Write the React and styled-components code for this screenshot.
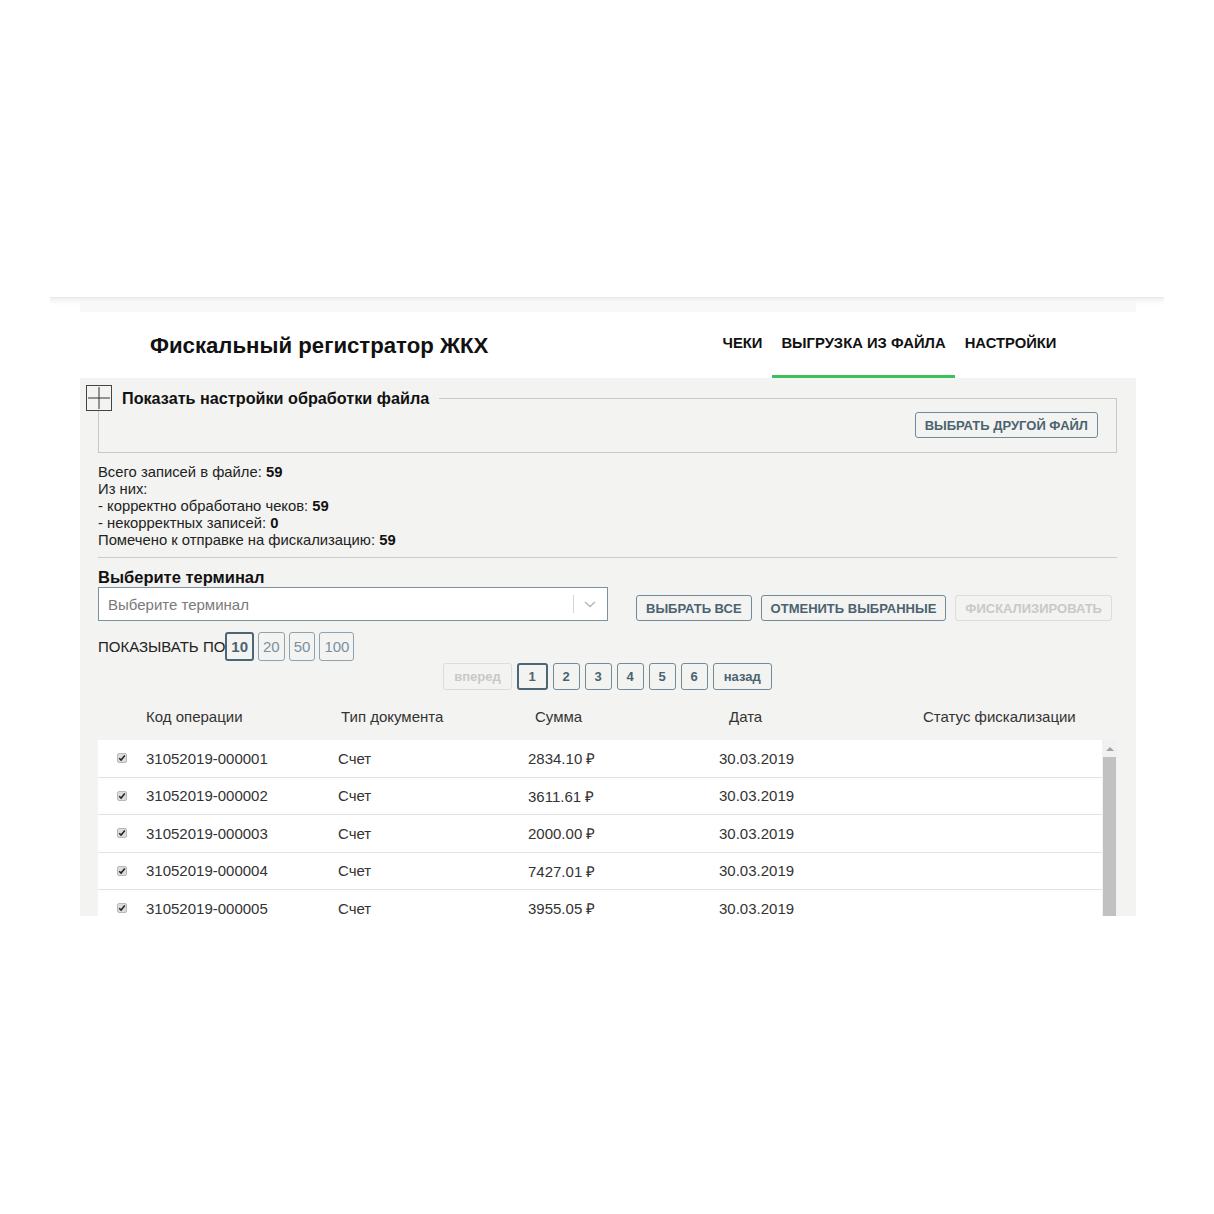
import React from "react";
import styled, { createGlobalStyle } from "styled-components";

const GlobalStyle = createGlobalStyle`
  body {
    margin: 0;
    background: #fff;
    font-family: "Liberation Sans", Arial, sans-serif;
    color: #222;
  }
`;

const rows = [
  ["31052019-000001", "Счет", "2834.10 ₽", "30.03.2019"],
  ["31052019-000002", "Счет", "3611.61 ₽", "30.03.2019"],
  ["31052019-000003", "Счет", "2000.00 ₽", "30.03.2019"],
  ["31052019-000004", "Счет", "7427.01 ₽", "30.03.2019"],
  ["31052019-000005", "Счет", "3955.05 ₽", "30.03.2019"],
];

function App() {
  return (
    <Page>
      <GlobalStyle />
      <Frame>
        <Panel>
          <TopStrip />
          <Header>
            <Title>Фискальный регистратор ЖКХ</Title>
            <Nav>
              <Tab>ЧЕКИ</Tab>
              <Tab active>ВЫГРУЗКА ИЗ ФАЙЛА</Tab>
              <Tab>НАСТРОЙКИ</Tab>
            </Nav>
          </Header>

          <Content>
            <FileBox>
              <Legend>
                <PlusBox>
                  <svg width="24" height="24" viewBox="0 0 24 24">
                    <path d="M12 1v22M1 12h22" stroke="#333" strokeWidth="1" fill="none" />
                  </svg>
                </PlusBox>
                Показать настройки обработки файла
              </Legend>
              <FileActions>
                <Button>ВЫБРАТЬ ДРУГОЙ ФАЙЛ</Button>
              </FileActions>
            </FileBox>

            <Stats>
              <div>Всего записей в файле: <b>59</b></div>
              <div>Из них:</div>
              <div>- корректно обработано чеков: <b>59</b></div>
              <div>- некорректных записей: <b>0</b></div>
              <div>Помечено к отправке на фискализацию: <b>59</b></div>
            </Stats>

            <Separator />

            <Label>Выберите терминал</Label>
            <ControlsRow>
              <Select>
                <Placeholder>Выберите терминал</Placeholder>
                <SelectDivider />
                <svg width="14" height="14" viewBox="0 0 14 14">
                  <path d="M2 5l5 4.5L12 5" stroke="#b5b5b5" strokeWidth="1.4" fill="none" />
                </svg>
              </Select>
              <ButtonGroup>
                <Button>ВЫБРАТЬ ВСЕ</Button>
                <Button>ОТМЕНИТЬ ВЫБРАННЫЕ</Button>
                <Button disabled>ФИСКАЛИЗИРОВАТЬ</Button>
              </ButtonGroup>
            </ControlsRow>

            <PerPageRow>
              <span>ПОКАЗЫВАТЬ ПО</span>
              <SizeButton active>10</SizeButton>
              <SizeButton>20</SizeButton>
              <SizeButton>50</SizeButton>
              <SizeButton>100</SizeButton>
            </PerPageRow>

            <Pager>
              <PageButton disabled wide>вперед</PageButton>
              <PageButton active>1</PageButton>
              <PageButton>2</PageButton>
              <PageButton>3</PageButton>
              <PageButton>4</PageButton>
              <PageButton>5</PageButton>
              <PageButton>6</PageButton>
              <PageButton wide>назад</PageButton>
            </Pager>

            <TableHead>
              <span />
              <HeadCell>Код операции</HeadCell>
              <HeadCell>Тип документа</HeadCell>
              <HeadCell>Сумма</HeadCell>
              <HeadCell>Дата</HeadCell>
              <HeadCell>Статус фискализации</HeadCell>
            </TableHead>

            <TableBody>
              <Rows>
                {rows.map((r) => (
                  <Row key={r[0]}>
                    <CheckCell>
                      <Check>
                        <svg width="8" height="8" viewBox="0 0 8 8">
                          <path d="M1.2 4.2l1.9 1.9L6.8 1.6" stroke="#222" strokeWidth="1.5" fill="none" />
                        </svg>
                      </Check>
                    </CheckCell>
                    <Cell>{r[0]}</Cell>
                    <Cell>{r[1]}</Cell>
                    <Cell>{r[2]}</Cell>
                    <Cell>{r[3]}</Cell>
                    <Cell />
                  </Row>
                ))}
              </Rows>
              <ScrollTrack>
                <ScrollArrow>
                  <svg width="8" height="6" viewBox="0 0 8 6">
                    <path d="M0 5h8L4 1z" fill="#a3a3a3" />
                  </svg>
                </ScrollArrow>
                <ScrollThumb />
              </ScrollTrack>
            </TableBody>
          </Content>
        </Panel>
      </Frame>
    </Page>
  );
}

const Page = styled.div`
  padding: 297px 0 0 50px;
  width: 1114px;
`;

const Frame = styled.div`
  border-top: 1px solid #e9e9e9;
  background: linear-gradient(#efefef, #fafafa 4px, #fff 8px);
  padding: 0 28px 0 30px;
`;

const Panel = styled.div`
  width: 1056px;
`;

const TopStrip = styled.div`
  height: 14px;
  background: linear-gradient(#eeeeee, #f8f8f8 4px);
`;

const Header = styled.header`
  height: 66px;
  background: #fff;
  display: flex;
  align-items: stretch;
`;

const Title = styled.h1`
  margin: 0 0 0 70px;
  align-self: center;
  padding-top: 1px;
  font-size: 22.2px;
  font-weight: bold;
  color: #111;
`;

const Nav = styled.nav`
  margin-left: auto;
  margin-right: 70px;
  display: flex;
`;

const Tab = styled.div`
  display: flex;
  align-items: center;
  padding: 0 9.5px 1px;
  font-size: 14.8px;
  font-weight: bold;
  color: #111;
  border-bottom: 3px solid ${(p) => (p.active ? "#3cc15a" : "transparent")};
`;

const Content = styled.main`
  box-sizing: border-box;
  background: #f3f3f1;
  height: 538px;
  overflow: hidden;
  padding: 7px 19px 0 18px;
`;

const FileBox = styled.fieldset`
  margin: 0;
  padding: 1px 18px 14px 19px;
  border: 1px solid #c9c9c9;
  min-width: 0;
`;

const Legend = styled.legend`
  display: flex;
  align-items: center;
  gap: 10px;
  margin-left: -32px;
  padding: 0 10px 0 0;
  font-size: 16.2px;
  font-weight: bold;
  color: #111;
`;

const PlusBox = styled.span`
  width: 24px;
  height: 24px;
  border: 1px solid #444;
  background: #f3f3f1;
  display: flex;
`;

const FileActions = styled.div`
  display: flex;
  justify-content: flex-end;
`;

const Button = styled.button`
  height: 26px;
  padding: 0 9px;
  background: transparent;
  border: 1px solid ${(p) => (p.disabled ? "#dcdcdc" : "#748a96")};
  border-radius: 3px;
  font-family: "Liberation Sans", Arial, sans-serif;
  font-size: 13px;
  font-weight: bold;
  color: ${(p) => (p.disabled ? "#c9c9c9" : "#4b6370")};
`;

const Stats = styled.div`
  margin-top: 11px;
  font-size: 14.8px;
  line-height: 17px;
  color: #222;
  b {
    color: #111;
  }
`;

const Separator = styled.hr`
  margin: 8px 0 0;
  border: 0;
  border-top: 1px solid #cdcdcd;
`;

const Label = styled.div`
  margin-top: 9px;
  font-size: 16.5px;
  line-height: 20px;
  font-weight: bold;
  color: #111;
`;

const ControlsRow = styled.div`
  display: flex;
  align-items: flex-end;
  gap: 28px;
`;

const Select = styled.div`
  box-sizing: border-box;
  width: 510px;
  height: 34px;
  border: 1px solid #7d919c;
  background: #fff;
  display: flex;
  align-items: center;
  padding-right: 10px;
`;

const Placeholder = styled.span`
  flex: 1;
  padding-left: 9px;
  font-size: 15px;
  color: #7a7a7a;
`;

const SelectDivider = styled.span`
  width: 1px;
  height: 18px;
  background: #d5d5d5;
  margin-right: 9px;
`;

const ButtonGroup = styled.div`
  display: flex;
  gap: 9px;
`;

const PerPageRow = styled.div`
  margin-top: 11px;
  display: flex;
  align-items: center;
  gap: 4px;
  font-size: 15px;
  color: #222;
  span {
    margin-right: -4px;
  }
`;

const SizeButton = styled.button`
  height: 29px;
  min-width: 26px;
  padding: 0 4px;
  background: transparent;
  border: ${(p) => (p.active ? "2px solid #4e6674" : "1px solid #8fa2ad")};
  border-radius: 3px;
  font-family: "Liberation Sans", Arial, sans-serif;
  font-size: 15px;
  font-weight: ${(p) => (p.active ? "bold" : "normal")};
  color: ${(p) => (p.active ? "#4b6370" : "#7990a0")};
`;

const Pager = styled.div`
  margin-top: 2px;
  display: flex;
  justify-content: center;
  gap: 5px;
`;

const PageButton = styled.button`
  height: 27px;
  min-width: ${(p) => (p.active ? "31px" : "27px")};
  padding: 0 ${(p) => (p.wide ? "10px" : "0")};
  background: transparent;
  border: ${(p) =>
    p.active ? "2px solid #4e6674" : p.disabled ? "1px solid #dcdcdc" : "1px solid #748a96"};
  border-radius: 3px;
  font-family: "Liberation Sans", Arial, sans-serif;
  font-size: 13px;
  font-weight: bold;
  color: ${(p) => (p.disabled ? "#c9c9c9" : "#4b6370")};
`;

const TableHead = styled.div`
  display: grid;
  grid-template-columns: 48px 195px 194px 194px 194px 1fr;
  height: 50px;
  padding-top: 3px;
  box-sizing: border-box;
  align-items: center;
  font-size: 15px;
  color: #333;
`;

const HeadCell = styled.span`
  white-space: nowrap;
`;

const TableBody = styled.div`
  display: flex;
  background: #fff;
`;

const Rows = styled.div`
  flex: 1;
`;

const Row = styled.div`
  display: grid;
  grid-template-columns: 48px 192px 190px 191px 190px 1fr;
  align-items: center;
  height: 36.5px;
  border-bottom: 1px solid #e2e2e2;
  font-size: 15px;
  color: #333;
`;

const CheckCell = styled.div`
  display: flex;
  padding-left: 19px;
`;

const Check = styled.span`
  width: 10px;
  height: 10px;
  border-radius: 2px;
  background: #dcdcdc;
  border: 1px solid #b8b8b8;
  box-sizing: border-box;
  display: flex;
  align-items: center;
  justify-content: center;
`;

const Cell = styled.span`
  white-space: nowrap;
`;

const ScrollTrack = styled.div`
  width: 15px;
  background: #f1f1f1;
  display: flex;
  flex-direction: column;
  align-items: center;
`;

const ScrollArrow = styled.div`
  height: 17px;
  display: flex;
  align-items: center;
`;

const ScrollThumb = styled.div`
  width: 13px;
  flex: 1;
  background: #c1c1c1;
`;

export default App;
